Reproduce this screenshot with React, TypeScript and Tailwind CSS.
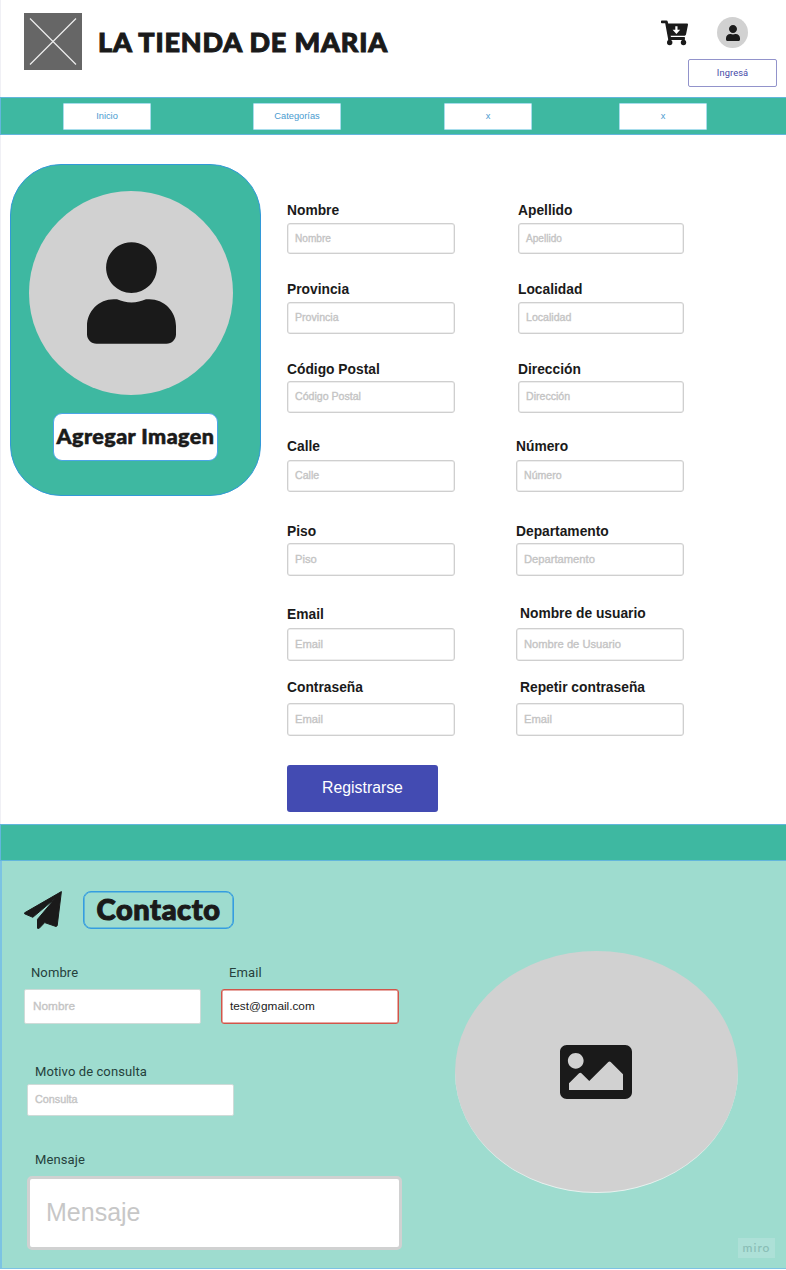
import { FaImage, FaUser } from "react-icons/fa";
import clsx from "clsx";

type FieldProps = {
  label: string;
  hint: string;
  gap: string;
  box: string;
  text: string;
  labelClass?: string;
};

function Field({ label, hint, gap, box, text, labelClass }: FieldProps) {
  return (
    <div className={clsx("flex flex-col", gap)}>
      <label className={clsx("h-4 whitespace-nowrap text-[13.8px] leading-[18px] font-bold text-[#1a1a1a]", labelClass)}>
        {label}
      </label>
      <div
        className={clsx(
          "flex items-center rounded-[3px] border border-[#cfcfcf] bg-white pl-[7px] text-[#c4c4c4] shadow-[inset_0_0_0_0.5px_#dedede] [-webkit-text-stroke:0.35px_#c4c4c4]",
          box,
          text,
        )}
      >
        {hint}
      </div>
    </div>
  );
}

const small = "text-[10.1px]";
const medium = "text-[10.6px]";
const large = "text-[11.2px]";

const leftFields: FieldProps[] = [
  { label: "Nombre", hint: "Nombre", gap: "gap-[5px]", box: "h-[31px]", text: small },
  { label: "Provincia", hint: "Provincia", gap: "mt-[27px] gap-[5px]", box: "h-8", text: medium },
  { label: "Código Postal", hint: "Código Postal", gap: "mt-[27px] gap-1", box: "h-8", text: medium },
  { label: "Calle", hint: "Calle", gap: "mt-[25px] gap-1.5", box: "h-8", text: medium },
  { label: "Piso", hint: "Piso", gap: "mt-[31px] gap-1", box: "h-[33px]", text: large },
  { label: "Email", hint: "Email", gap: "mt-[30px] gap-1.5", box: "h-[33px]", text: large },
  { label: "Contraseña", hint: "Email", gap: "mt-[18px] gap-2", box: "h-[33px]", text: large },
];

const rightFields: FieldProps[] = [
  { label: "Apellido", hint: "Apellido", gap: "ml-0.5 gap-[5px]", box: "h-[31px]", text: small },
  { label: "Localidad", hint: "Localidad", gap: "ml-0.5 mt-[27px] gap-[5px]", box: "h-8", text: medium },
  { label: "Dirección", hint: "Dirección", gap: "ml-0.5 mt-[27px] gap-1", box: "h-8", text: medium },
  { label: "Número", hint: "Número", gap: "mt-[25px] gap-1.5", box: "h-8", text: medium },
  { label: "Departamento", hint: "Departamento", gap: "mt-[31px] gap-1", box: "h-[33px]", text: large },
  { label: "Nombre de usuario", hint: "Nombre de Usuario", gap: "mt-[29px] gap-[7px]", box: "h-[33px]", text: large, labelClass: "ml-1" },
  { label: "Repetir contraseña", hint: "Email", gap: "mt-[18px] gap-2", box: "h-[33px]", text: large, labelClass: "ml-1" },
];

const navItems = [
  { label: "Inicio", margin: "ml-[62px]" },
  { label: "Categorías", margin: "ml-[102px]" },
  { label: "x", margin: "ml-[103px]" },
  { label: "x", margin: "ml-[87px]" },
];

function CartIcon() {
  return (
    <svg className="mt-[3px] mr-7 h-[26px] w-7" viewBox="0 0 28 26" fill="#1a1a1a">
      <path d="M.8.400H5.500q1 0 1.200 1l.5 2.200H26q1.200 0 1 1.200L25 14.600q-.2 1.100-1.300 1.100H9.600l.4 1.400h13.200q1 0 .8 1.400-.2 1.400-1.200 1.400H7.300L4.200 3.300H.8Q0 3.300 0 2.500V1.200Q0 .4.800.400Z" />
      <circle cx="8.700" cy="22.500" r="2.700" />
      <circle cx="22.500" cy="22.500" r="2.700" />
      <path d="M7.600 19h2.200v3H7.600ZM21.500 19h2.200v3H21.500Z" />
      <path d="M14.300 6.300h2.200v3.500H19.200L15.400 14l-3.800-4.200h2.700Z" fill="#fff" />
    </svg>
  );
}

function PlaneIcon() {
  return (
    <svg className="size-[38px]" viewBox="0 0 38 38" fill="#1a1a1a" stroke="#1a1a1a" strokeWidth="1" strokeLinejoin="round">
      <path d="M37.400.600.600 21.800v1L8.800 26.300 31 7.600 13.500 28.300V37.300H15.200L20.700 31.600 32 35.500 33.200 34.700Z" />
    </svg>
  );
}

function Header() {
  return (
    <header className="flex h-[97px] items-start justify-between border-l border-[#f0f0f5] pl-[23px]">
      <div className="flex pt-[13px]">
        <svg className="h-[57px] w-[58px]" viewBox="0 0 58 57">
          <rect width="58" height="57" fill="#666" />
          <path d="M6 5.500 52 51.500M52 5.500 6 51.500" stroke="#eee" strokeWidth="1.200" />
        </svg>
        <h1 className="ml-4 pt-[11px] font-['Lato'] text-[27px] leading-9 font-black tracking-[0.85px] whitespace-nowrap text-[#1a1a1a] [-webkit-text-stroke:1px_#1a1a1a]">
          LA TIENDA DE MARIA
        </h1>
      </div>
      <div className="flex flex-col items-end pt-[17px] pr-[9px]">
        <div className="flex items-start pr-[29px]">
          <CartIcon />
          <div className="flex size-[31px] items-center justify-center rounded-full bg-[#d1d1d1]">
            <FaUser className="h-4 w-3.5 text-[#1a1a1a]" />
          </div>
        </div>
        <button className="mt-[11px] h-7 w-[89px] rounded-[2px] border border-[#9293cb] pb-px font-['Roboto'] text-[9.3px] tracking-[0.1px] text-[#4549a8]">
          Ingresá
        </button>
      </div>
    </header>
  );
}

function Nav() {
  return (
    <nav className="flex h-[38px] items-center border border-r-0 border-[#62b6dc] bg-[#3eb8a1]">
      {navItems.map((item, i) => (
        <button
          key={i}
          className={clsx(
            "h-[27px] w-[88px] rounded-[1px] border border-[#a7ddec] bg-white pt-px text-[9.3px] text-[#4a9bd0]",
            item.margin,
          )}
        >
          {item.label}
        </button>
      ))}
    </nav>
  );
}

function ImageCard() {
  return (
    <aside className="mt-[29px] ml-[10px] flex h-[332px] w-[251px] flex-col rounded-[51px] border border-[#3299d8] bg-[#3eb8a1] pt-[26px]">
      <div className="ml-[18px] flex size-[204px] items-center justify-center rounded-full bg-[#d1d1d1]">
        <FaUser className="h-[102px] w-[89px] text-[#1a1a1a]" />
      </div>
      <button className="mt-[18px] ml-[42px] flex h-12 w-[165px] items-center justify-center rounded-[9px] border border-[#4ba5e8] bg-white pb-px font-['Lato'] text-[21.5px] font-black tracking-[0.45px] whitespace-nowrap text-[#1a1a1a] [-webkit-text-stroke:0.6px_#1a1a1a]">
        Agregar Imagen
      </button>
    </aside>
  );
}

function Registration() {
  return (
    <form className="mt-[67px] ml-[26px] flex flex-col items-start">
      <div className="flex gap-[61px]">
        <div className="flex w-[168px] flex-col">
          {leftFields.map((f) => (
            <Field key={f.label} {...f} />
          ))}
        </div>
        <div className="flex w-[168px] flex-col">
          {rightFields.map((f) => (
            <Field key={f.label} {...f} />
          ))}
        </div>
      </div>
      <button type="button" className="mt-[29px] h-[47px] w-[151px] rounded-[3px] bg-[#434bb2] pb-0.5 text-[15.8px] text-white">
        Registrarse
      </button>
    </form>
  );
}

const contactLabel = "font-['Roboto'] text-[13px] leading-4 tracking-[0.1px] text-[#25413c] whitespace-nowrap";
const contactInput = "flex items-center rounded-[2px] border border-[#cfdbd8] bg-white text-[#c4c4c4] [-webkit-text-stroke:0.35px_#c4c4c4]";

function Contact() {
  return (
    <section className="flex h-[408px] border-b border-l-2 border-[#7cc3e3] bg-[#9edccf]">
      <div className="w-[453px] pt-[30px]">
        <div className="flex items-center pl-[22px]">
          <PlaneIcon />
          <h2 className="ml-[21px] flex h-[38px] w-[151px] items-center justify-center rounded-[8px] border border-[#359de0] pb-0.5 font-['Lato'] text-[29px] font-black tracking-[0.6px] text-[#1a1a1a] shadow-[inset_0_0_0_0.6px_#359de0] [-webkit-text-stroke:1.1px_#1a1a1a]">
            Contacto
          </h2>
        </div>
        <div className="mt-9 flex gap-5 pl-[22px]">
          <div className="w-[177px]">
            <div className={clsx(contactLabel, "ml-[7px]")}>Nombre</div>
            <div className={clsx(contactInput, "mt-2 h-[35px] pl-2 text-[11.8px]")}>Nombre</div>
          </div>
          <div className="w-[178px]">
            <div className={clsx(contactLabel, "ml-2")}>Email</div>
            <div className="mt-2 flex h-[35px] items-center rounded-[3px] border border-[#d2554a] bg-white pl-2 text-[11.8px] text-[#1a1a1a] shadow-[inset_0_0_0_0.5px_#d2554a]">
              test@gmail.com
            </div>
          </div>
        </div>
        <div className={clsx(contactLabel, "mt-10 ml-[33px]")}>Motivo de consulta</div>
        <div className={clsx(contactInput, "mt-1 ml-[25px] h-8 w-[207px] pb-px pl-[7px] text-[10.8px]")}>Consulta</div>
        <div className={clsx(contactLabel, "mt-9 ml-[33px]")}>Mensaje</div>
        <div className="mt-2 ml-[25px] flex h-[74px] w-[375px] items-center rounded-[5px] border-[3px] border-[#d0d1d1] bg-white pl-4 text-[25px] text-[#c7c7c7]">
          Mensaje
        </div>
      </div>
      <div className="mt-[90px] flex h-[242px] w-[283px] shrink-0 items-center justify-center rounded-[50%] border-b border-[#e8f1ef] bg-[#d1d1d1] pr-0.5">
        <FaImage className="size-[72px] text-[#1a1a1a]" />
      </div>
      <div className="mb-[10px] flex h-5 w-[37px] shrink-0 items-center justify-center self-end bg-[#ade0d7] font-['Lato'] text-[12px] font-medium tracking-[1px] text-[#89bdb5]">
        miro
      </div>
    </section>
  );
}

export default function App() {
  return (
    <div className="h-[1270px] w-[786px] overflow-hidden bg-white font-['Liberation_Sans',Arial,sans-serif]">
      <Header />
      <Nav />
      <main className="flex h-[689px] items-start border-l border-[#f0f0f5]">
        <div className="-ml-px flex items-start">
          <ImageCard />
          <Registration />
        </div>
      </main>
      <div className="h-[37px] border border-r-0 border-[#62b6dc] bg-[#3eb8a1]" />
      <Contact />
    </div>
  );
}
